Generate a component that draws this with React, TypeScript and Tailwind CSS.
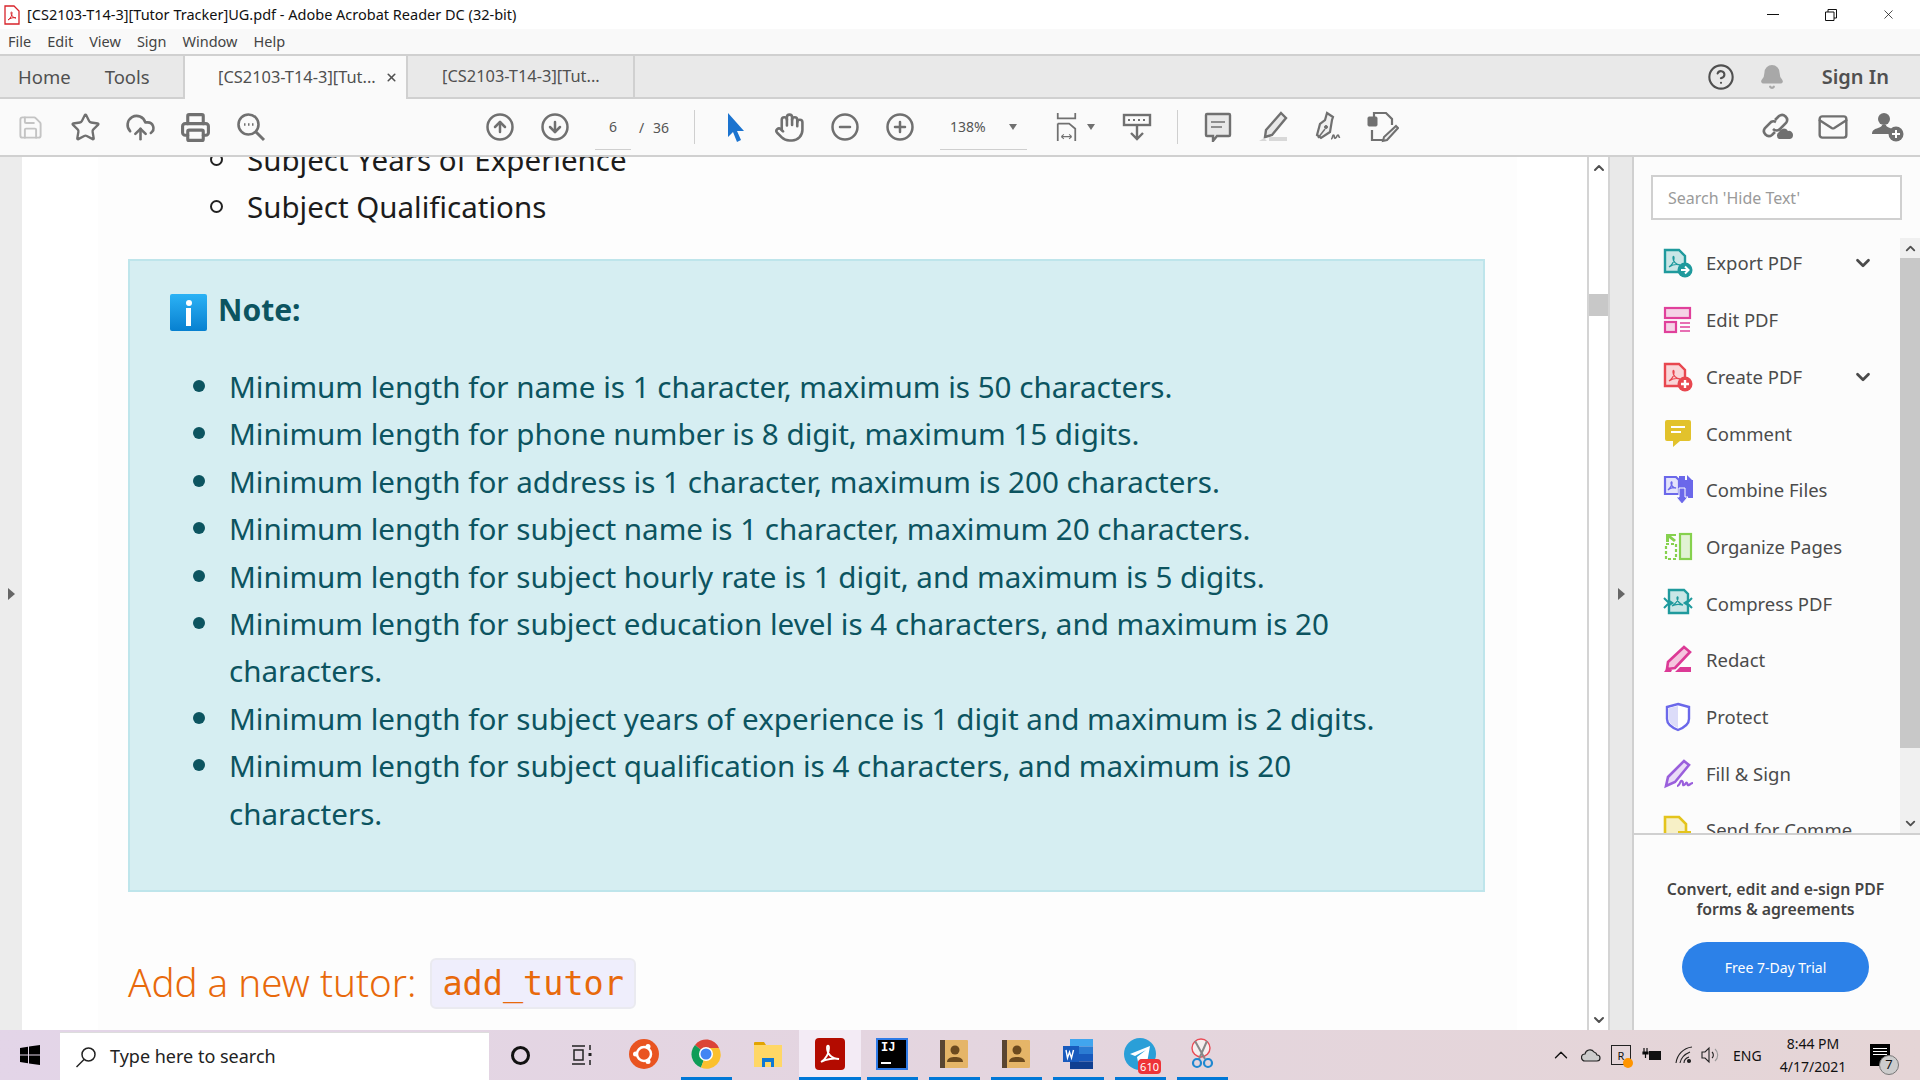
import React from 'react'
import {
  ArrowDownCircle,
  ArrowUpCircle,
  ChevronDown,
  ChevronUp,
  CircleHelp,
  Bell,
  Hand,
  Mail,
  MinusCircle,
  PlusCircle,
  Printer,
  Save,
  Star,
  UploadCloud,
  X,
} from 'lucide-react'

const notes = [
  'Minimum length for name is 1 character, maximum is 50 characters.',
  'Minimum length for phone number is 8 digit, maximum 15 digits.',
  'Minimum length for address is 1 character, maximum is 200 characters.',
  'Minimum length for subject name is 1 character, maximum 20 characters.',
  'Minimum length for subject hourly rate is 1 digit, and maximum is 5 digits.',
  'Minimum length for subject education level is 4 characters, and maximum is 20 characters.',
  'Minimum length for subject years of experience is 1 digit and maximum is 2 digits.',
  'Minimum length for subject qualification is 4 characters, and maximum is 20 characters.',
]

const Acro: React.FC<{ color: string; d?: string }> = ({
  color,
  d = 'M6 19c3-2 5-6 5-9 0-2-1-2-1 0 0 3 3 7 7 7-3-1-8 0-11 2z',
}) => (
  <path d={d} fill="none" stroke={color} strokeWidth="1.3" />
)

const ExportIcon = () => (
  <svg width="30" height="30" viewBox="0 0 30 30">
    <path d="M2 2h14l6 6v16H2z" fill="#c9e6e6" stroke="#1f9a9d" strokeWidth="2.4" />
    <Acro color="#1f9a9d" />
    <circle cx="22" cy="22" r="7.5" fill="#1f9a9d" />
    <path d="M18 22h7M22 18.5l3.5 3.5-3.5 3.5" fill="none" stroke="#fff" strokeWidth="2" />
  </svg>
)

const EditIcon = () => (
  <svg width="30" height="30" viewBox="0 0 30 30">
    <rect x="2" y="3" width="25" height="10" fill="#f5d3e6" stroke="#e0409b" strokeWidth="2.2" />
    <rect x="2" y="17" width="11" height="10" fill="#f5d3e6" stroke="#e0409b" strokeWidth="2.2" />
    <path d="M17 18h10M17 22h10M17 26h10" stroke="#e0409b" strokeWidth="1.6" />
  </svg>
)

const CreateIcon = () => (
  <svg width="30" height="30" viewBox="0 0 30 30">
    <path d="M2 2h14l6 6v16H2z" fill="#f9d6d8" stroke="#e8474f" strokeWidth="2.4" />
    <Acro color="#e8474f" />
    <circle cx="22" cy="22" r="7.5" fill="#e8474f" />
    <path d="M18 22h8M22 18v8" stroke="#fff" strokeWidth="2.4" />
  </svg>
)

const CommentIcon = () => (
  <svg width="30" height="30" viewBox="0 0 30 30">
    <path d="M4 2h22a2 2 0 0 1 2 2v17a2 2 0 0 1-2 2H17l-7 6v-6H4a2 2 0 0 1-2-2V4a2 2 0 0 1 2-2z" fill="#e2c22c" />
    <path d="M8 9h14M8 14h10" stroke="#fff" strokeWidth="2.2" />
  </svg>
)

const CombineIcon = () => (
  <svg width="32" height="32" viewBox="0 0 32 32">
    <path d="M16 2h6v4h4l4 0v18h-8V14h-6z" fill="#6b68ea" />
    <path d="M24 1l6 6h-6z" fill="#6b68ea" />
    <path d="M2 3h11l3 3v14H2z" fill="#e3e3fb" stroke="#6b68ea" strokeWidth="2.2" />
    <Acro color="#6b68ea" d="M5 16c2-2 4-5 4-7 0-2-1-1-1 0 0 2 2 5 5 5-2-1-6 0-8 2z" />
    <path d="M16 14h6v9h3l-6 7-6-7h3z" fill="#6b68ea" stroke="#fff" strokeWidth="1" />
  </svg>
)

const OrganizeIcon = () => (
  <svg width="30" height="30" viewBox="0 0 30 30">
    <rect x="17" y="2" width="11" height="25" fill="#e1f2d3" stroke="#86d14e" strokeWidth="2.2" />
    <path d="M3 12h10v15H3z" fill="none" stroke="#86d14e" strokeWidth="2.2" strokeDasharray="3 2" />
    <path d="M13 2v2H8l5 4-2 2-5-4v4H3V2z" fill="#86d14e" />
  </svg>
)

const CompressIcon = () => (
  <svg width="30" height="30" viewBox="0 0 30 30">
    <path d="M6 2h15l4 4v7l-3 2 3 2v8H6v-8l3-2-3-2z" fill="#c9e6e6" stroke="#1f9a9d" strokeWidth="2.4" />
    <path d="M1 10l5 5-5 5M29 10l-5 5 5 5" fill="none" stroke="#1f9a9d" strokeWidth="2" />
    <Acro color="#1f9a9d" d="M9 18c3-2 6-5 6-8 0-2-1-1-1 0 0 3 3 6 6 7-4-1-8-1-11 1z" />
  </svg>
)

const RedactIcon = () => (
  <svg width="30" height="30" viewBox="0 0 30 30">
    <path d="M21 2l6 5-15 16-8 1 1-7z" fill="#f5c5df" stroke="#dc3a96" strokeWidth="2.6" />
    <path d="M1 27l3-4 5 2-1 2zM12 27l5-5h11v5z" fill="#dc3a96" />
  </svg>
)

const ProtectIcon = () => (
  <svg width="30" height="30" viewBox="0 0 30 30">
    <path d="M15 2l11 3v12c0 6-6 9-11 11C10 26 4 23 4 17V5z" fill="#fff" stroke="#6b68ea" strokeWidth="2.4" />
    <path d="M15 4v22c-4-2-9-4-9-9V6z" fill="#dcdcf9" />
  </svg>
)

const FillSignIcon = () => (
  <svg width="32" height="30" viewBox="0 0 32 30">
    <path d="M21 2l5 4-14 17-9 4 2-9z" fill="#eadcf7" stroke="#9a5fdc" strokeWidth="2.6" />
    <path d="M14 27c3 0 3-6 5-5s0 5 2 4 2-3 3-2 0 3 2 2 2-2 4-2" fill="none" stroke="#9a5fdc" strokeWidth="2.2" />
  </svg>
)

const SendIcon = () => (
  <svg width="30" height="30" viewBox="0 0 30 30">
    <path d="M2 2h14l7 7v19H2z" fill="#f7f0c6" stroke="#e4c41c" strokeWidth="2.6" />
    <rect x="15" y="16" width="13" height="12" fill="#e4c41c" />
  </svg>
)

const tools = [
  { label: 'Export PDF', icon: <ExportIcon />, more: true },
  { label: 'Edit PDF', icon: <EditIcon /> },
  { label: 'Create PDF', icon: <CreateIcon />, more: true },
  { label: 'Comment', icon: <CommentIcon /> },
  { label: 'Combine Files', icon: <CombineIcon /> },
  { label: 'Organize Pages', icon: <OrganizeIcon /> },
  { label: 'Compress PDF', icon: <CompressIcon /> },
  { label: 'Redact', icon: <RedactIcon /> },
  { label: 'Protect', icon: <ProtectIcon /> },
  { label: 'Fill & Sign', icon: <FillSignIcon /> },
  { label: 'Send for Comme', icon: <SendIcon /> },
]

const Slot: React.FC<{ children: React.ReactNode; className?: string }> = ({
  children,
  className,
}) => (
  <div className={`flex h-[34px] w-[55px] items-center justify-center ${className ?? ''}`}>
    {children}
  </div>
)

const Toolbar = () => (
  <div className="flex h-[58px] items-center border-b-2 border-[#d0d0d0] bg-[#fafafa] pl-[3px] text-[#707070]">
    <Slot>
      <Save size={27} strokeWidth={1.7} className="text-[#c4c4c4]" />
    </Slot>
    <Slot>
      <Star size={31} strokeWidth={1.8} />
    </Slot>
    <Slot>
      <UploadCloud size={31} strokeWidth={2} />
    </Slot>
    <Slot>
      <Printer size={31} strokeWidth={2.4} />
    </Slot>
    <Slot>
      <svg width="30" height="30" viewBox="0 0 30 30" fill="none" stroke="currentColor" strokeWidth="2.6">
        <circle cx="12.5" cy="12.5" r="10" />
        <path d="M20 20l8 8" strokeWidth="3" />
        <path d="M8 12.5h1.5M12 12.5h1.5M16 12.5h1.5" />
      </svg>
    </Slot>
    <div className="w-[194px]" />
    <Slot>
      <ArrowUpCircle size={30} strokeWidth={2} />
    </Slot>
    <Slot>
      <ArrowDownCircle size={30} strokeWidth={2} />
    </Slot>
    <div className="ml-[13px] flex h-[46px] w-[36px] items-center justify-center border-b border-[#cfcfcf] text-[14px] text-[#555]">
      6
    </div>
    <div className="ml-[8px] flex w-[30px] justify-between text-[14px] text-[#555]">
      <span>/</span>
      <span>36</span>
    </div>
    <div className="ml-[25px] h-[34px] w-px bg-[#cfcfcf]" />
    <Slot className="ml-[12px]">
      <svg className="ml-[3px]" width="20" height="30" viewBox="0 0 20 30">
        <path d="M2 1l16 18h-7l4 9-4 2-4-10-5 5z" fill="#1b73cf" />
      </svg>
    </Slot>
    <Slot>
      <Hand size={31} strokeWidth={2} />
    </Slot>
    <Slot>
      <MinusCircle size={30} strokeWidth={2} />
    </Slot>
    <Slot>
      <PlusCircle size={30} strokeWidth={2} />
    </Slot>
    <div className="ml-[13px] flex h-[46px] w-[87px] items-center border-b border-[#cfcfcf] pl-[10px] text-[14px] text-[#555]">
      <span>138%</span>
      <span className="ml-[23px] h-0 w-0 border-x-[4px] border-t-[6px] border-x-transparent border-t-[#707070]" />
    </div>
    <div className="ml-[29px] flex items-center">
      <svg width="21" height="32" viewBox="0 0 24 32" fill="none" stroke="currentColor" strokeWidth="2">
        <path d="M2 0v6h20V0" />
        <path d="M2 12h13l7 6v14M2 12v20" />
        <path d="M6 27h12M6 27l3-2.500M6 27l3 2.500M18 27l-3-2.500M18 27l-3 2.500" strokeWidth="1.300" />
      </svg>
      <span className="ml-[10px] h-0 w-0 border-x-[4px] border-t-[6px] border-x-transparent border-t-[#707070]" />
    </div>
    <Slot className="ml-[14px]">
      <svg width="30" height="30" viewBox="0 0 30 30" fill="none" stroke="currentColor">
        <rect x="2" y="3" width="26" height="10" strokeWidth="2.400" />
        <path d="M6 8h2M11 8h2M16 8h2M21 8h2" strokeWidth="2" />
        <path d="M15 13v14M9 21l6 6 6-6" strokeWidth="2.400" />
      </svg>
    </Slot>
    <div className="ml-[13px] h-[34px] w-px bg-[#cfcfcf]" />
    <Slot className="ml-[12px]">
      <svg width="28" height="30" viewBox="0 0 28 30">
        <path d="M3 2h22a1 1 0 0 1 1 1v20a1 1 0 0 1-1 1H13l-4 5v-5H3a1 1 0 0 1-1-1V3a1 1 0 0 1 1-1z" fill="#e8e8e8" stroke="currentColor" strokeWidth="2.400" />
        <path d="M7 10h14M7 15h11" stroke="currentColor" strokeWidth="1.600" />
      </svg>
    </Slot>
    <Slot>
      <svg width="30" height="32" viewBox="0 0 30 32">
        <path d="M23 2l5 5-14 17-7 2 1-7z" fill="#e8e8e8" stroke="currentColor" strokeWidth="2.400" />
        <path d="M1 30l5-3 3 3zM11 26h18v4H11z" fill="#d8d8d8" />
      </svg>
    </Slot>
    <Slot>
      <svg width="30" height="32" viewBox="0 0 30 32" fill="none" stroke="currentColor">
        <path d="M14 2l6 4-1 3 -2 12-9 6-4-3 3-11 5-4z" fill="#f0f0f0" strokeWidth="2.200" />
        <path d="M5 27l7-9" strokeWidth="1.500" />
        <circle cx="13" cy="16" r="1.500" fill="currentColor" />
        <path d="M18 28c2 0 1-4 2.500-4s0 4 2 3 1-3 2.500-3 0 3 2 2" strokeWidth="1.600" />
      </svg>
    </Slot>
    <Slot>
      <svg width="32" height="32" viewBox="0 0 32 32" fill="none" stroke="currentColor">
        <rect x="1" y="6" width="9" height="9" rx="1" fill="currentColor" />
        <path d="M7 6V2h12l6 6v6" strokeWidth="2.200" />
        <path d="M5 19v10h11" strokeWidth="2.200" />
        <path d="M29 15l2 2-11 12-4 1 1-4z" fill="#f0f0f0" strokeWidth="2" />
      </svg>
    </Slot>
    <div className="flex-1" />
    <Slot>
      <svg width="32" height="28" viewBox="0 0 32 28" fill="none" stroke="currentColor" strokeWidth="2.600">
        <path d="M13 7l4-4a5 5 0 0 1 7 7l-6 6a5 5 0 0 1-7 0" />
        <path d="M14 9a5 5 0 0 0-5 0l-6 6a5 5 0 0 0 7 7l3-3" />
        <path d="M17 26a4 4 0 0 1 0-7 5 5 0 0 1 9-1 4 4 0 0 1 5 4 4 4 0 0 1-3 4z" fill="currentColor" stroke="none" />
      </svg>
    </Slot>
    <Slot>
      <Mail size={32} strokeWidth={1.8} />
    </Slot>
    <Slot className="mr-[5px]">
      <svg width="32" height="30" viewBox="0 0 32 30">
        <circle cx="12" cy="7" r="6" fill="currentColor" />
        <path d="M0 22c0-4 3-5 6-6 3-1 4-2 4-3h4c0 1 1 2 4 3l2 1a9 9 0 0 0-3 5z" fill="currentColor" />
        <circle cx="24" cy="22" r="7.500" fill="currentColor" />
        <path d="M24 18v8M20 22h8" stroke="#fff" strokeWidth="2" />
      </svg>
    </Slot>
  </div>
)

const ScrollBtn: React.FC<{ up?: boolean }> = ({ up }) => (
  <div className="flex h-[20px] w-full items-center justify-center text-[#505050]">
    {up ? <ChevronUp size={16} strokeWidth={3} /> : <ChevronDown size={16} strokeWidth={3} />}
  </div>
)

const PageView = () => (
  <div className="flex min-w-0 flex-1 overflow-hidden bg-white">
    <div className="h-[873px] flex-1 overflow-hidden">
      <div className="-mt-[21px] mr-[70px] ml-[76px] h-[900px] bg-[#fdfdfd] pr-[32px] pl-[30px] text-[#1c1c1c]">
        <div className="text-[29.5px] leading-[47px]">
          <div className="flex items-center">
            <span className="ml-[82px] h-[13px] w-[13px] rounded-full border-2 border-[#222]" />
            <span className="ml-[24px]">Subject Years of Experience</span>
          </div>
          <div className="flex items-center">
            <span className="ml-[82px] h-[13px] w-[13px] rounded-full border-2 border-[#222]" />
            <span className="ml-[24px]">Subject Qualifications</span>
          </div>
        </div>
        <div className="mt-[29px] h-[633px] border-2 border-[#bee5eb] bg-[#d6eef2] pt-[33px] pr-[40px] pl-[40px] text-[#0c5460]">
          <div className="flex h-[37px] items-center">
            <div className="flex h-[37px] w-[37px] flex-col items-center justify-center rounded-[2px] bg-gradient-to-b from-[#2bb2f5] to-[#0680d0]">
              <span className="h-[6px] w-[6px] rounded-full bg-white" />
              <span className="mt-[2px] h-[18px] w-[5px] bg-white" />
            </div>
            <span className="mb-[7px] ml-[11px] text-[30px] font-bold">Note:</span>
          </div>
          <ul className="mt-[32px] pl-[23px] text-[29.6px] leading-[47.400px]">
            {notes.map((note) => (
              <li key={note} className="flex">
                <span className="mt-[17px] mr-[24px] h-[12px] w-[12px] shrink-0 rounded-full bg-[#0c5460]" />
                <span>{note}</span>
              </li>
            ))}
          </ul>
        </div>
        <div className="mt-[62px] flex items-center text-[38.5px] leading-[52px] font-light text-[#e8690b]">
          <span>Add a new tutor:</span>
          <span className="mt-[4px] ml-[14px] rounded-[6px] border-2 border-[#eaeaf0] bg-[#efeefc] px-[10px] font-['DejaVu_Sans_Mono',monospace] text-[33.5px] leading-[47px] font-normal">
            add_tutor
          </span>
        </div>
      </div>
    </div>
    <div className="flex w-[23px] flex-col border-x-2 border-[#d4d4d4] bg-white">
      <div className="mt-[1px]">
        <ScrollBtn up />
      </div>
      <div className="mt-[116px] h-[22px] bg-[#c8c8c8]" />
      <div className="flex-1" />
      <ScrollBtn />
    </div>
  </div>
)

const SidePanel = () => (
  <div className="flex w-[288px] flex-col border-l-2 border-[#d0d0d0] bg-[#fcfcfc]">
    <div className="h-[75px] px-[17px] pt-[18px]">
      <div className="flex h-[45px] w-[251px] items-center border-2 border-[#d0d0d0] bg-white pl-[15px] text-[16px] text-[#9a9a9a]">
        {"Search 'Hide Text'"}
      </div>
    </div>
    <div className="flex h-[603px] border-b-2 border-[#d0d0d0]">
      <div className="min-w-0 flex-1 overflow-hidden pt-[3px] pr-[17px] pl-[17px]">
        {tools.map((tool) => (
          <div key={tool.label} className="flex h-[56.700px] items-center text-[18.5px] whitespace-nowrap text-[#4b4b4b]">
            <span className="flex w-[55px] shrink-0 justify-start pl-[12px]">{tool.icon}</span>
            <span className="flex-1">{tool.label}</span>
            {tool.more && (
              <ChevronDown size={22} strokeWidth={3} className="mr-[9px] text-[#4b4b4b]" />
            )}
          </div>
        ))}
      </div>
      <div className="w-[20px] pt-[6px]">
        <div className="flex h-full flex-col bg-[#f0f0f0]">
          <div className="flex h-[20px] items-center justify-center text-[#505050]">
            <ChevronUp size={15} strokeWidth={3} />
          </div>
          <div className="h-[490px] bg-[#c8c8c8]" />
          <div className="flex-1" />
          <div className="flex h-[20px] items-center justify-center text-[#505050]">
            <ChevronDown size={15} strokeWidth={3} />
          </div>
        </div>
      </div>
    </div>
    <div className="flex flex-1 flex-col items-center pt-[44px] pr-[3px]">
      <div className="text-center text-[15.8px] leading-[20px] font-semibold whitespace-nowrap text-[#444]">
        Convert, edit and e-sign PDF
        <br />
        forms &amp; agreements
      </div>
      <button className="mt-[23px] flex h-[50px] w-[187px] items-center justify-center rounded-full bg-[#2c81e8] text-[14px] text-white">
        Free 7-Day Trial
      </button>
    </div>
  </div>
)

const AppBtn: React.FC<{ children: React.ReactNode; active?: boolean; bar?: boolean }> = ({
  children,
  active,
  bar = true,
}) => (
  <div className={`flex h-[50px] w-[62px] flex-col items-center ${active ? 'bg-[#f3ebf5]' : ''}`}>
    <div className="flex flex-1 items-center justify-center">{children}</div>
    {bar ? (
      <div className={`h-[3px] bg-[#0078d7] ${active ? 'w-[62px]' : 'w-[51px]'}`} />
    ) : (
      <div className="h-[3px]" />
    )}
  </div>
)

const ContactsIcon = () => (
  <svg width="28" height="30" viewBox="0 0 28 30">
    <rect x="0" y="1" width="28" height="28" rx="1" fill="#e5b568" />
    <rect x="0" y="1" width="5" height="28" fill="#5a4632" />
    <circle cx="15" cy="11" r="4.500" fill="#6b4a1f" />
    <path d="M7 23c0-4 4-5 8-5s8 1 8 5z" fill="#6b4a1f" />
  </svg>
)

const Taskbar = () => (
  <div className="flex h-[50px] items-center bg-gradient-to-r from-[#e3d5e8] to-[#e5d5d6] text-[#111]">
    <div className="flex w-[60px] justify-center">
      <svg width="20" height="20" viewBox="0 0 20 20" fill="#000">
        <path d="M0 3l8-1.200V9.500H0zM9 1.600L20 0v9.500H9zM0 10.500h8v7.700L0 17zM9 10.500h11V20L9 18.400z" />
      </svg>
    </div>
    <div className="flex h-[48px] w-[429px] items-center self-end border-t border-[#ddd] bg-white pl-[15px] text-[18px] text-[#222]">
      <svg width="22" height="22" viewBox="0 0 22 22" fill="none" stroke="#222" strokeWidth="1.500">
        <circle cx="13.500" cy="8.500" r="6.500" />
        <path d="M9 13.500L1.500 21" />
      </svg>
      <span className="ml-[13px]">Type here to search</span>
    </div>
    <div className="flex w-[62px] justify-center">
      <span className="h-[19px] w-[19px] rounded-full border-[3px] border-[#111]" />
    </div>
    <div className="flex w-[62px] justify-center">
      <svg width="22" height="22" viewBox="0 0 22 22" fill="none" stroke="#222" strokeWidth="1.500">
        <path d="M1 2h13M1 20h13M3 6h9v10H3zM19 1v5M19 16v5" />
        <rect x="17.500" y="9" width="3" height="3" fill="#222" stroke="none" />
      </svg>
    </div>
    <AppBtn bar={false}>
      <svg width="30" height="30" viewBox="0 0 30 30">
        <circle cx="15" cy="15" r="15" fill="#e95420" />
        <circle cx="15" cy="15" r="7" fill="none" stroke="#fff" strokeWidth="2.500" />
        <circle cx="6.500" cy="15" r="2.500" fill="#fff" />
        <circle cx="19" cy="7.500" r="2.500" fill="#fff" />
        <circle cx="19" cy="22.500" r="2.500" fill="#fff" />
      </svg>
    </AppBtn>
    <AppBtn>
      <svg width="30" height="30" viewBox="0 0 30 30">
        <path d="M15 15L4 6a14 14 0 0 1 24 3H15z" fill="#db4437" />
        <path d="M15 15L4 6a14 14 0 0 0 6 22.500z" fill="#0f9d58" />
        <path d="M15 15l-5 13.500A14 14 0 0 0 28 9H15z" fill="#fbc02d" />
        <circle cx="15" cy="15" r="7" fill="#fff" />
        <circle cx="15" cy="15" r="5.500" fill="#4285f4" />
      </svg>
    </AppBtn>
    <AppBtn bar={false}>
      <svg width="30" height="28" viewBox="0 0 30 28">
        <path d="M1 3a1 1 0 0 1 1-1h9l2 3H1z" fill="#e2a400" />
        <rect x="1" y="5" width="28" height="22" fill="#ffd766" />
        <path d="M9 27V18h12v9h-3v-5h-6v5z" fill="#0f78d4" />
      </svg>
    </AppBtn>
    <AppBtn active>
      <svg width="30" height="32" viewBox="0 0 30 32">
        <rect width="30" height="32" rx="4" fill="#b30b00" />
        <path d="M6 24c5-3 8-9 8-14 0-3-2-3-2 0 0 6 5 11 12 11-5-1-13 0-18 3z" fill="none" stroke="#fff" strokeWidth="1.800" />
      </svg>
    </AppBtn>
    <AppBtn>
      <div className="flex h-[28px] w-[28px] flex-col bg-black px-[3px] pt-[1px] font-['Liberation_Mono',monospace] text-[12px] leading-[14px] font-bold text-white outline-2 outline-[#2f7be6]">
        <span>IJ</span>
        <span className="mt-[7px] h-[2px] w-[10px] bg-white" />
      </div>
    </AppBtn>
    <AppBtn>
      <ContactsIcon />
    </AppBtn>
    <AppBtn>
      <ContactsIcon />
    </AppBtn>
    <AppBtn>
      <svg width="32" height="32" viewBox="0 0 32 32">
        <rect x="8" y="1" width="23" height="7.500" fill="#41a5ee" />
        <rect x="8" y="8.500" width="23" height="7.500" fill="#2b7cd3" />
        <rect x="8" y="16" width="23" height="7.500" fill="#185abd" />
        <rect x="8" y="23.500" width="23" height="7.500" fill="#103f91" />
        <rect x="1" y="8" width="16" height="16" fill="#185abd" />
        <path d="M4 12l1.500 8 2-6 2 6 2-8" fill="none" stroke="#fff" strokeWidth="1.400" />
      </svg>
    </AppBtn>
    <AppBtn>
      <div className="relative">
        <svg width="32" height="32" viewBox="0 0 32 32">
          <circle cx="16" cy="16" r="16" fill="#2a9fd8" />
          <path d="M6 16l20-8-3 17-6-4-3 3-1-5 9-7-11 6z" fill="#fff" />
        </svg>
        <span className="absolute -right-[5px] -bottom-[4px] rounded-[4px] bg-[#ee3338] px-[2px] text-[11px] leading-[15px] text-white">
          610
        </span>
      </div>
    </AppBtn>
    <AppBtn>
      <svg width="30" height="32" viewBox="0 0 30 32" fill="none">
        <circle cx="14" cy="10" r="9" fill="#f5eeee" stroke="#ea4b55" strokeWidth="1.400" />
        <path d="M8 3l10 18M20 3l-8 18" stroke="#888" strokeWidth="2" />
        <circle cx="10" cy="25" r="4" stroke="#1f88d0" strokeWidth="2.200" />
        <circle cx="21" cy="25" r="4" stroke="#1f88d0" strokeWidth="2.200" />
      </svg>
    </AppBtn>
    <div className="flex-1" />
    <div className="flex items-center">
      <ChevronUp size={22} strokeWidth={1.500} />
      <svg className="ml-[9px]" width="20" height="14" viewBox="0 0 20 14">
        <path d="M4 13a3.500 3.500 0 0 1 0-7 5 5 0 0 1 9-2 4 4 0 0 1 3 3 3 3 0 0 1 0 6z" fill="#ccc" stroke="#222" strokeWidth="1.200" />
      </svg>
      <div className="relative ml-[10px] flex h-[20px] w-[20px] items-center justify-center border border-[#222] text-[11px] leading-none">
        R
        <span className="absolute -right-[3px] -bottom-[4px] h-[10px] w-[10px] rounded-full bg-[#ff9500]" />
      </div>
      <svg className="ml-[11px]" width="20" height="14" viewBox="0 0 20 14">
        <path d="M2 0v4M5 0v4M1 4h5v2H1zM3.500 6v4" stroke="#111" strokeWidth="1.200" />
        <rect x="7" y="3" width="12" height="9" fill="#111" />
      </svg>
      <svg className="ml-[13px]" width="18" height="18" viewBox="0 0 18 18" fill="none" stroke="#222" strokeWidth="1.100">
        <path d="M1 17C2 9 8 2 17 1M5 17c1-5 5-9 10-11M9 17c0-3 2-5 5-6" />
        <circle cx="14" cy="15" r="1.500" fill="#222" />
      </svg>
      <svg className="ml-[7px]" width="20" height="20" viewBox="0 0 20 20" fill="none" stroke="#222" strokeWidth="1.100">
        <path d="M2 7h3l4-4v14l-4-4H2z" />
        <path d="M12 7a4 4 0 0 1 0 6" />
        <path d="M15 4a8 8 0 0 1 0 12" stroke="#999" />
      </svg>
      <span className="ml-[13px] w-[30px] text-[14px]">ENG</span>
      <div className="ml-[14px] w-[72px] text-center text-[14px] leading-[23px]">
        8:44 PM
        <br />
        4/17/2021
      </div>
      <div className="relative mr-[30px] ml-[21px] flex h-[22px] w-[20px] flex-col gap-[2px] bg-black px-[3px] pt-[4px]">
        <span className="h-px bg-white" />
        <span className="h-px bg-white" />
        <span className="h-px bg-white" />
        <span className="absolute -right-[9px] -bottom-[9px] flex h-[20px] w-[20px] items-center justify-center rounded-full border border-[#777] bg-[#ccc] text-[13px]">
          7
        </span>
      </div>
    </div>
  </div>
)

const App: React.FC = () => {
  return (
    <div className="flex h-[1080px] w-[1920px] flex-col overflow-hidden bg-white font-['Noto_Sans',sans-serif]">
      <div className="flex h-[29px] items-center text-[14.500px] text-[#111]">
        <svg className="ml-[4px]" width="16" height="20" viewBox="0 0 16 20">
          <path d="M1 1h9l5 5v13H1z" fill="#fff" stroke="#d8232a" strokeWidth="1.300" />
          <path d="M4 15c3-2 4-5 4-7 0-2-1-1-1 0 0 2 2 5 5 5-2-1-6 0-8 2z" fill="none" stroke="#d8232a" />
        </svg>
        <span className="ml-[7px]">[CS2103-T14-3][Tutor Tracker]UG.pdf - Adobe Acrobat Reader DC (32-bit)</span>
        <div className="flex-1" />
        <span className="h-px w-[12px] bg-[#111]" />
        <svg className="ml-[46px]" width="12" height="12" viewBox="0 0 12 12" fill="none" stroke="#111">
          <path d="M.5 3h8.500v8.500H.5zM3 3V.5h8.500V9H9" />
        </svg>
        <X size={15} strokeWidth={1.200} className="mr-[24px] ml-[44px]" />
      </div>
      <div className="flex h-[25px] items-center gap-[16px] bg-[#f9f9f9] pl-[8px] text-[14.500px] text-[#444]">
        <span>File</span>
        <span>Edit</span>
        <span>View</span>
        <span>Sign</span>
        <span>Window</span>
        <span>Help</span>
      </div>
      <div className="flex h-[45px] border-y-2 border-[#d0d0d0] bg-[#e9e9e9] text-[#505050]">
        <div className="flex w-[183px] items-center gap-[34px] pl-[18px] text-[18.5px]">
          <span>Home</span>
          <span>Tools</span>
        </div>
        <div className="-mb-[2px] flex w-[225px] items-center border-x-2 border-[#d0d0d0] bg-[#fafafa] pl-[33px] text-[16.400px]">
          <span>[CS2103-T14-3][Tut...</span>
          <X size={13} strokeWidth={3} className="ml-[9px]" />
        </div>
        <div className="flex w-[227px] items-center border-r-2 border-[#d0d0d0] pl-[34px] text-[16.400px]">
          [CS2103-T14-3][Tut...
        </div>
        <div className="flex-1" />
        <div className="flex items-center pr-[31px]">
          <CircleHelp size={28} strokeWidth={1.800} />
          <Bell size={26} fill="#a8a8a8" className="ml-[24px] text-[#a8a8a8]" />
          <span className="ml-[37px] text-[20px] font-semibold">Sign In</span>
        </div>
      </div>
      <Toolbar />
      <div className="flex min-h-0 flex-1">
        <div className="flex w-[22px] items-center justify-center bg-[#ececec]">
          <span className="h-0 w-0 border-y-[6px] border-l-[7px] border-y-transparent border-l-[#666]" />
        </div>
        <PageView />
        <div className="flex w-[22px] items-center justify-center bg-[#e9e9e9]">
          <span className="h-0 w-0 border-y-[6px] border-l-[7px] border-y-transparent border-l-[#666]" />
        </div>
        <SidePanel />
      </div>
      <Taskbar />
    </div>
  )
}

export default App
